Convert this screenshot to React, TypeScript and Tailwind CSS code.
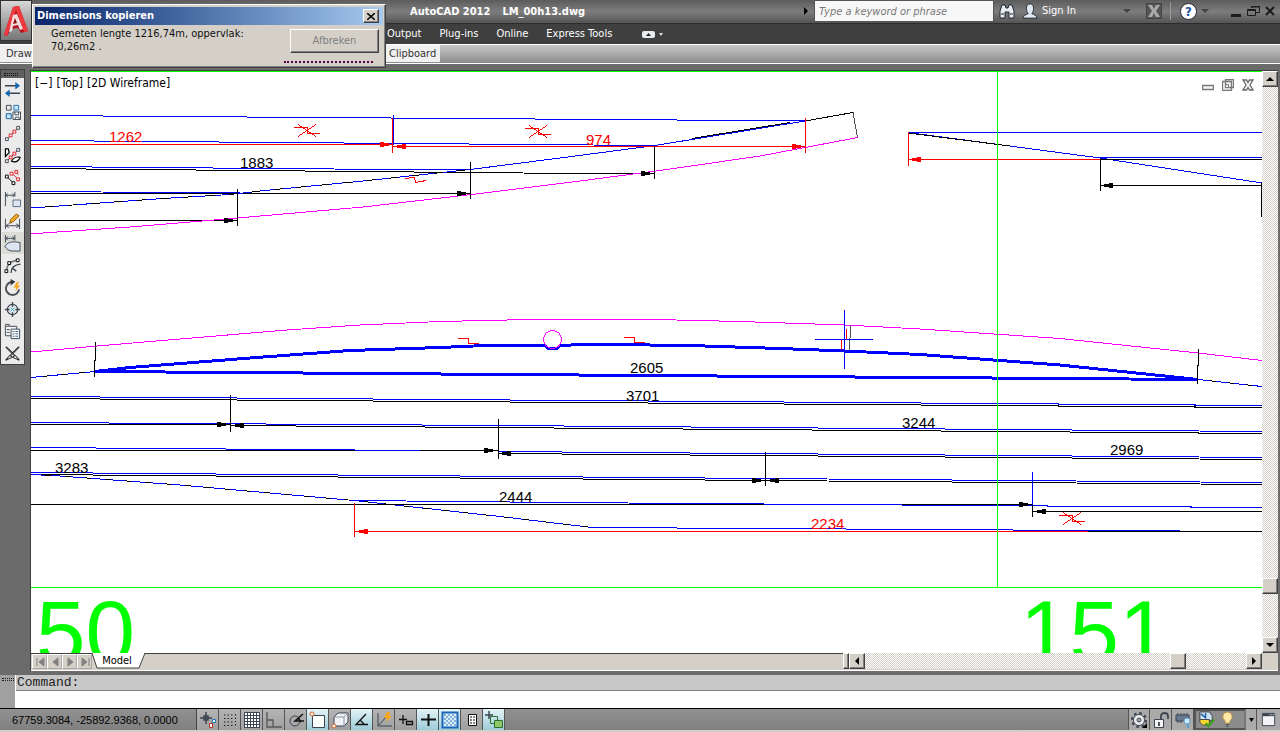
import type { ReactNode } from "react";

const ui = "font-['DejaVu_Sans_Condensed','Noto_Sans',sans-serif]";
const track = "bg-[conic-gradient(#d4d0c8_25%,#ffffff_0_50%,#d4d0c8_0_75%,#ffffff_0)] bg-[length:2px_2px]";
const bevel = "bg-[#d4d0c8] border border-t-white border-l-white border-r-[#404040] border-b-[#404040] shadow-[inset_-1px_-1px_0_#808080]";

type Pt = [number, number];

function Line({ pts, c = "#000", w = 1, dash }: { pts: Pt[]; c?: string; w?: number; dash?: string }) {
  return <polyline points={pts.map((p) => p.join(",")).join(" ")} fill="none" stroke={c} strokeWidth={w} strokeDasharray={dash} />;
}

// dir 1 points right, -1 points left
function Arrow({ x, y, dir, c = "#000" }: { x: number; y: number; dir: number; c?: string }) {
  return <path d={`M${x} ${y}L${x - dir * 13} ${y - 3}V${y + 3}Z`} fill={c} />;
}

function Cross({ x, y }: { x: number; y: number }) {
  return <path d={`M${x - 13} ${y - 3}h13v6h13M${x - 9} ${y - 6}l18 12M${x + 9} ${y - 6}l-18 12`} fill="none" stroke="#f00" />;
}

function Step({ x, y }: { x: number; y: number }) {
  return <path d={`M${x} ${y}h10v5h11`} fill="none" stroke="#f00" />;
}

const B = "#0000ff";
const K = "#000000";
const R = "#ff0000";
const M = "#ff00ff";
const G = "#00ff00";

const lines: { pts: Pt[]; c: string; w?: number; dash?: string }[] = [
  // upper fan
  { pts: [[31, 115.5], [805, 120.9]], c: B },
  { pts: [[31, 140.5], [655, 145.5]], c: B },
  { pts: [[31, 166.5], [394, 169.5], [470, 169.5]], c: B },
  { pts: [[31, 168.5], [577, 173.5], [654, 173.5]], c: K },
  { pts: [[31, 193.5], [470, 193.5]], c: K },
  { pts: [[31, 191.5], [240, 193]], c: B },
  { pts: [[31, 220.5], [237, 220.5]], c: K },
  { pts: [[31, 208], [163, 198.5], [230, 194.5], [263, 190.7], [363, 181], [470, 169.5], [560, 158], [655, 145.5], [805, 121], [853, 112.5]], c: K },
  { pts: [[31, 208], [163, 198.5], [230, 194.5], [263, 190.7], [363, 181], [470, 169.5], [560, 158]], c: B, dash: "14 9" },
  { pts: [[470, 169.5], [560, 158], [655, 145.5], [805, 121]], c: B },
  { pts: [[692, 138.5], [790, 122.5]], c: K },
  { pts: [[853, 112.5], [857.5, 137.5]], c: "#505050" },
  { pts: [[31, 233.8], [130, 227], [240, 217.8], [363, 207], [480, 193.5], [580, 181], [660, 170.5], [760, 156], [858, 137.5]], c: M },
  { pts: [[31, 144.5], [393, 144.5]], c: R },
  { pts: [[393, 146.5], [805, 146.5]], c: R },
  { pts: [[393.5, 115], [393.5, 145]], c: B },
  { pts: [[392.5, 118], [392.5, 153]], c: R },
  { pts: [[805.5, 118], [805.5, 153]], c: R },
  { pts: [[237.5, 189], [237.5, 226]], c: K },
  { pts: [[470.5, 162], [470.5, 199]], c: K },
  { pts: [[654.5, 146], [654.5, 179]], c: K },
  // right fan
  { pts: [[908, 132.5], [1262, 132.5]], c: B },
  { pts: [[908, 132.5], [1100, 158], [1262, 183]], c: B },
  { pts: [[908, 133], [1010, 146]], c: K },
  { pts: [[1100, 157.5], [1262, 157.5]], c: B },
  { pts: [[908, 159.5], [1262, 159.5]], c: K },
  { pts: [[908, 159.5], [1100, 159.5]], c: R },
  { pts: [[908.5, 132], [908.5, 166]], c: R },
  { pts: [[1100, 185.5], [1262, 185.5]], c: K },
  { pts: [[1100.5, 158], [1100.5, 191]], c: K },
  { pts: [[1261.5, 183], [1261.5, 217]], c: K },
  // arc
  { pts: [[31, 352], [97, 346], [287, 330], [360, 325], [440, 321.5], [530, 319.5], [655, 319.5], [740, 321.5], [845, 325], [920, 329], [1060, 338.5], [1198, 353], [1262, 360.5]], c: M },
  { pts: [[31, 377.5], [95, 371.5]], c: K },
  { pts: [[31, 377.5], [95, 371.5]], c: B, dash: "12 6" },
  { pts: [[95, 371.5], [130, 367.5], [250, 358], [350, 350.5], [440, 347.5], [485, 345.5], [545, 345.5], [548, 348.5], [557, 348.5], [560, 345.5], [582, 344.5], [622, 344.5], [705, 346], [780, 348.5], [845, 351], [920, 354.5], [1060, 365], [1198, 379.5]], c: B, w: 3 },
  { pts: [[95, 371.5], [1198, 379.5]], c: B, w: 3 },
  { pts: [[1198, 379.5], [1262, 386.5]], c: K },
  { pts: [[1198, 379.5], [1262, 386.5]], c: B, dash: "12 6" },
  { pts: [[95.5, 342], [95.5, 360], [94.5, 361], [94.5, 377]], c: K },
  { pts: [[1198.5, 349], [1198.5, 365], [1197.5, 366], [1197.5, 384]], c: K },
  // lower rows
  { pts: [[31, 396.5], [1262, 405.5]], c: B },
  { pts: [[31, 398.5], [1262, 407.5]], c: K },
  { pts: [[31, 424.5], [230, 424.5]], c: K },
  { pts: [[31, 422.5], [500, 425.5], [1262, 431.5]], c: B },
  { pts: [[230, 425.5], [1262, 433.5]], c: K },
  { pts: [[31, 450.5], [498, 450.5]], c: K },
  { pts: [[31, 447.5], [420, 450.5]], c: B },
  { pts: [[498, 451.5], [1262, 457.5]], c: B },
  { pts: [[498, 453.5], [1262, 459.5]], c: K },
  { pts: [[31, 472.5], [765, 478.5], [1262, 482.5]], c: B },
  { pts: [[31, 474.5], [765, 480.5], [1262, 484.5]], c: K },
  { pts: [[31, 474.5], [60, 476], [180, 485], [354, 500.5], [500, 516.5], [592, 527.5]], c: K },
  { pts: [[31, 474.5], [60, 476], [180, 485], [354, 500.5], [500, 516.5], [592, 527.5]], c: B, dash: "14 6" },
  { pts: [[31, 504.5], [1032, 504.5]], c: K },
  { pts: [[354, 500.5], [560, 502.5], [830, 504.5], [1262, 507.5]], c: B },
  { pts: [[1032, 511.5], [1262, 511.5]], c: K },
  { pts: [[592, 527.5], [1262, 531.5]], c: B },
  { pts: [[354, 531.5], [1262, 531.5]], c: K },
  { pts: [[354, 531.5], [1088, 531.5]], c: R },
  { pts: [[230.5, 395], [230.5, 432]], c: K },
  { pts: [[498.5, 419], [498.5, 459]], c: K },
  { pts: [[765.5, 452], [765.5, 486]], c: K },
  { pts: [[1032.5, 472], [1032.5, 505]], c: B },
  { pts: [[1032.5, 505], [1032.5, 517]], c: K },
  { pts: [[354.5, 503], [354.5, 537]], c: R },
  // block insert
  { pts: [[841.5, 340], [841.5, 350]], c: R },
  { pts: [[846.5, 329], [846.5, 339]], c: R },
  { pts: [[850.5, 325], [850.5, 338]], c: "#505050" },
  { pts: [[849.5, 338], [849.5, 350]], c: "#505050" },
  { pts: [[844.5, 310], [844.5, 369]], c: B },
  { pts: [[815, 339.5], [873, 339.5]], c: B },
  // grid axes
  { pts: [[997.5, 71], [997.5, 587]], c: G },
  { pts: [[31, 587.5], [1262, 587.5]], c: G },
];

const arrows: [number, number, number, string][] = [
  [393, 144.5, 1, R], [393, 146.5, -1, R], [805, 146.5, 1, R], [237, 220.5, 1, K], [470, 193.5, 1, K],
  [654, 173.5, 1, K], [908, 159.5, -1, R], [1100, 185.5, -1, K], [230, 424.5, 1, K], [231, 425.5, -1, K],
  [497, 450.5, 1, K], [498, 453.5, -1, K], [765, 480.5, 1, K], [766, 480.5, -1, K], [1032, 504.5, 1, K],
  [1033, 511.5, -1, K], [355, 531.5, -1, R],
];

const labels: [string, number, number, string][] = [
  ["1262", 109, 142, R], ["974", 586, 145, R], ["1883", 240, 168, K], ["2605", 630, 373, K], ["3701", 626, 401, K],
  ["3244", 902, 428, K], ["2969", 1110, 455, K], ["3283", 55, 473, K], ["2444", 499, 502, K], ["2234", 811, 529, R],
];

function Drawing() {
  return (
    <svg viewBox="31 72 1231 581" preserveAspectRatio="xMinYMin slice" className="absolute inset-0 w-full h-full" shapeRendering="crispEdges">
      {lines.map((l, i) => (
        <Line key={i} {...l} />
      ))}
      {arrows.map(([x, y, dir, c], i) => (
        <Arrow key={i} x={x} y={y} dir={dir} c={c} />
      ))}
      <Cross x={307} y={130.5} />
      <Cross x={538} y={131.5} />
      <Cross x={1072} y={518.5} />
      <Step x={458} y={338.5} />
      <Step x={624} y={337.5} />
      <path d="M405 178.5l9-1 2 5 10-2" fill="none" stroke={R} />
      <circle cx="552.5" cy="339.5" r="9" fill="none" stroke={M} />
      {labels.map(([t, x, y, c]) => (
        <text key={t} x={x} y={y} fill={c} className="text-[15px] font-['Liberation_Sans',sans-serif]">{t}</text>
      ))}
      <g fill={G} className="text-[89px] font-['Liberation_Sans',sans-serif]">
        <text x="36" y="663">50</text>
        <text x="1020" y="663">151</text>
      </g>
    </svg>
  );
}

function Icon({ children, size = 18 }: { children: ReactNode; size?: number }) {
  return (
    <svg width={size} height={size} viewBox="0 0 18 18" fill="none" stroke="#3b4450" aria-hidden="true" className="shrink-0">
      {children}
    </svg>
  );
}

const tools: { name: string; on?: boolean; art: ReactNode }[] = [
  { name: "Align", art: <><path d="M1 5h13M4 13h13" strokeWidth="1.500" /><path d="M12 1l5 4-5 4zM6 9l-5 4 5 4z" fill="#1066b0" stroke="none" /></> },
  { name: "Copy array", art: <><path d="M2.500 2.500h5v5h-5zM2.500 11.500h5v5h-5z" /><path d="M10.500 2.500h5v5h-5zM2.500 11.500h5v5h-5z" stroke="#1b75bc" fill="#cfe6f7" /><path d="M9.500 9.500h8v8h-8z" fill="#fff" /><path d="M11.500 9.500v3h4v-3M12 17v-2h4v2" /></> },
  { name: "Vertex line", art: <><path d="M3 15L15 3" stroke="#555" /><path d="M1.500 13.500h3v3h-3zM13.500 1.500h3v3h-3z" fill="#fff" /><path d="M5.500 9.500h3v3h-3zM9.500 5.500h3v3h-3z" stroke="#e01b24" fill="#fff" /></> },
  { name: "Vertex hatch", art: <><path d="M1.500 2v8l4-4-1-4zM8 15c2-4 6-5 9-4-1 4-5 6-9 4z" stroke="#000" fill="#fff" strokeWidth="1.300" /><path d="M3 15L15 3" /><path d="M1.500 13.500h3v3h-3zM13.500 1.500h3v3h-3z" fill="#fff" /><path d="M5.500 9.500h3v3h-3zM9.500 5.500h3v3h-3z" stroke="#e01b24" fill="#fff" /></> },
  { name: "Match vertices", art: <><path d="M3 8l7 7" stroke="#000" /><path d="M1.500 6.500h3v3h-3zM8.500 13.500h3v3h-3z" stroke="#000" fill="#fff" /><path d="M8 4l7 7M12 2l3 4" stroke="#e01b24" /><path d="M6.500 3.500h3v3h-3zM13.500 9.500h3v3h-3zM11.500 1.500h3v3h-3z" stroke="#e01b24" fill="#fff" /></> },
  { name: "Dimension block", art: <><path d="M1.500 1v15M11.500 1v5M2 4.500h9M4 2.500l-2 2 2 2M9 2.500l2 2-2 2" /><path d="M9.500 9.500h8v7h-8z" fill="#dde6f0" stroke="#5a6b80" /></> },
  { name: "Dimension edit", art: <><path d="M1.500 6v11M16.500 6v11M2 13.500h14M5 11.500l-3 2 3 2M13 11.500l3 2-3 2" /><path d="M6 11l1-4 6-6 3 2-6 6z" fill="#f5a623" stroke="#8a5a10" /></> },
  { name: "Dimension region", on: true, art: <><path d="M1.500 0v8M11.500 0v6M2 3.500h9M4 1.500l-2 2 2 2M9 1.500l2 2-2 2" /><path d="M1 12c4-6 9-5 16-4v9H9c-4 0-6-2-8-5z" fill="#dde6f0" /></> },
  { name: "Offset arc", art: <><path d="M2.500 15C3 8 8 4 15 3.500" strokeWidth="1.500" stroke="#777" /><path d="M7.500 17c0-6 3-9 10-9.500M9 12l4 3" strokeWidth="1.500" /><path d="M1 13.500h3v3H1zM4 5h3v3H4zM13 2h3v3h-3z" fill="#fff" stroke="#000" /></> },
  { name: "Update", art: <><path d="M10 3a7 7 0 1 0 6 8" strokeWidth="2" stroke="#4a5058" /><path d="M7 0l5 3-5 4z" fill="#333" stroke="none" /><path d="M14 3l-4 6h3l-1 4 5-6h-3l2-4z" fill="#f9a51a" stroke="none" /></> },
  { name: "Center mark", art: <><circle cx="9" cy="9" r="5.500" strokeWidth="1.300" /><path d="M9 1v5M9 12v5M1 9h5M12 9h5" strokeWidth="1.500" /><path d="M7 7l4 4M11 7l-4 4" stroke="#1b9ad6" /></> },
  { name: "Copy list", art: <><path d="M1.500 3.500h12v10h-12zM1.500 3V1.500h4V3M3 7h3M3 10h3" fill="#f4f4f4" /><path d="M7.500 6.500h9v10h-9z" fill="#fff" /><path d="M9 9h2M12 9h3M9 11.500h2M12 11.500h3M9 14h2M12 14h3" stroke="#33608a" /></> },
  { name: "Cut", art: <><path d="M2 2l14 14M16 2L2 16" strokeWidth="2" stroke="#666" /><path d="M2 2l8 7M16 2l-8 7" stroke="#222" /><path d="M2 16l4-5 3 2zM16 16l-4-5-3 2z" fill="#eee" stroke="#222" /></> },
];

const modes: { name: string; on?: boolean; art: ReactNode }[] = [
  { name: "Infer constraints", art: <><path d="M7 1v12M1 7h12M5 5h4v4H5z" strokeWidth="1.500" /><path d="M10.500 12.500h3v4h-3z" stroke="#b03020" fill="#fff" /><path d="M13.500 8.500h3v3h-3z" stroke="#1b75bc" fill="#fff" /></> },
  { name: "Snap", art: <path d="M3 4h9M3 7.500h9M3 11h9M3 14.500h9M14.500 3v8M14.500 13v2" stroke="#222" strokeDasharray="1.500 2" /> },
  { name: "Grid", art: <><path d="M1.500 1.500h15v15h-15z" fill="#fff" /><path d="M4.500 1v16M7.500 1v16M10.500 1v16M13.500 1v16M1 4.500h16M1 7.500h16M1 10.500h16M1 13.500h16" /></> },
  { name: "Ortho", art: <path d="M2 1v15h15M2 9h6v7" stroke="#555" strokeWidth="1.300" /> },
  { name: "Polar", art: <><circle cx="8" cy="10" r="5" /><path d="M17 10H8l8-7M11 7l3 4" stroke="#111" strokeWidth="1.500" /></> },
  { name: "Object snap", on: true, art: <><path d="M3.500 4.500h12v12h-12z" fill="#fff" /><circle cx="3" cy="3" r="2" stroke="#e0591b" fill="#fff" /></> },
  { name: "3D object snap", art: <><path d="M3 6l4-4h10v9l-4 4H3z" fill="#eef1f5" /><path d="M3 6h10l4-4M13 6v9" stroke="#8a94a2" /><circle cx="3" cy="15" r="2" stroke="#e0591b" fill="#fff" /></> },
  { name: "Object tracking", on: true, art: <path d="M13 3L3 13.500h12M7 9l4 4" stroke="#111" strokeWidth="1.300" /> },
  { name: "Dynamic UCS", art: <><path d="M3 2v13h14M3 15L12 5" /><path d="M12 1l-3 6h3l-1 4 6-6h-3l1-4z" fill="#f9a51a" stroke="none" /></> },
  { name: "Dynamic input", art: <path d="M6 4v9M2 8.500h8M9.500 10.500h6v3h-6z" stroke="#111" strokeWidth="1.300" /> },
  { name: "Line weight", on: true, art: <path d="M9.500 3v12M2 8.500h15" stroke="#111" strokeWidth="2" /> },
  { name: "Transparency", on: true, art: <><path d="M1.500 1.500h15v15h-15z" fill="#dcecf8" stroke="#1b66b8" strokeWidth="2" /><path d="M3 4h12M3 8h12M3 12h12" stroke="#7fb2dc" strokeWidth="2" strokeDasharray="2 2" /><path d="M5 6h10M5 10h10M5 14h10" stroke="#7fb2dc" strokeWidth="2" strokeDasharray="2 2" /></> },
  { name: "Quick properties", art: <><path d="M5.500 3.500h8v11h-8z" fill="#fff" stroke="#111" /><path d="M7 6h2M10 6h2M7 9h2M10 9h2M7 12h2M10 12h2" stroke="#111" /></> },
  { name: "Selection cycling", on: true, art: <><path d="M4 0v8M0 4h8" strokeWidth="1.500" /><path d="M5.500 5.500h7v7h-7z" stroke="#2f7030" /><path d="M9.500 9.500h8v7h-8z" fill="#8fc76b" stroke="#2f7030" /></> },
];

function Tri({ dir, c = "#000" }: { dir: "up" | "down" | "left" | "right"; c?: string }) {
  const d = { up: "M0 6h8L4 2z", down: "M0 2h8L4 6z", left: "M6 0v8L2 4z", right: "M2 0v8l4-4z" }[dir];
  return <svg width="8" height="8" viewBox="0 0 8 8" aria-hidden="true" className="shrink-0"><path d={d} fill={c} /></svg>;
}

function ScrollButton({ dir, label }: { dir: "up" | "down" | "left" | "right"; label: string }) {
  return (
    <button aria-label={label} className={`w-4 h-4 shrink-0 flex items-center justify-center ${bevel}`}>
      <Tri dir={dir} />
    </button>
  );
}

function Header() {
  return (
    <header className="flex shrink-0 h-11 bg-[#3f3f3f] text-white">
      <button aria-label="Application menu" className="w-8 h-[41px] shrink-0 border border-[#333] bg-linear-to-b from-[#d8d8d8] to-[#777] flex items-center pl-0.5">
        <svg width="26" height="34" viewBox="0 0 26 34" aria-hidden="true">
          <path d="M10 3l6-1 9 25-7 2-3-5-7 1-4 7-3-1z" fill="#b5121b" />
          <path d="M10 3l6-1 9 25-4 1L13 6 4 32l-3-1z" fill="#ee3a3f" />
          <path d="M12 12l-3 10 6-1z" fill="#8f0a10" />
          <path d="M10 11l4-1 6 15-3 1-2-5-5 1-1 5-3 1zM12 14l-2 6 4-1z" fill="#fff" fillOpacity=".85" />
        </svg>
      </button>
      <div className="flex-1 min-w-0">
        <div className="h-6 flex items-start border-b border-[#2c2c2c] bg-linear-to-b from-[#5c5c5c] via-[#7d7d7d] to-[#555] pl-[378px]">
          <h1 className="flex gap-3 h-6 items-center text-[11px] font-bold whitespace-nowrap">
            <span>AutoCAD 2012</span>
            <span>LM_00h13.dwg</span>
          </h1>
          <div className="ml-auto flex items-center h-[22px]">
            <Tri dir="right" />
            <input aria-label="Search" placeholder="Type a keyword or phrase" className="ml-1 w-[180px] h-[22px] px-1 border border-[#555] bg-[#f7f7f7] text-[11px] italic text-black placeholder:text-[#777]" />
            <button aria-label="Find" className="ml-1">
              <Icon>
                <path d="M2 9l2-6h3l1 3h2l1-3h3l2 6v7h-5v-6H7v6H2z" fill="#e8edf2" stroke="#20262e" />
                <path d="M3 12h3M12 12h3" stroke="#20262e" />
              </Icon>
            </button>
            <button className="ml-1.5 flex items-center gap-1 text-[11px] w-[86px] whitespace-nowrap">
              <Icon size={16}>
                <path d="M9 1c-3 0-4 2-4 5s1 5 2 6c-3 1-5 2-6 5h16c-1-3-3-4-6-5 1-1 2-3 2-6s-1-5-4-5z" fill="#dfe8f2" stroke="#20262e" />
              </Icon>
              Sign In
            </button>
            <div className="w-[38px] flex justify-center"><Tri dir="down" c="#444" /></div>
            <button aria-label="Exchange" className="w-4 h-4 bg-[#555] border border-[#444]">
              <svg viewBox="0 0 14 14" aria-hidden="true"><path d="M1 1h4l2 4 2-4h4l-4 6 4 6H9L7 9l-2 4H1l4-6z" fill="#aaa" /></svg>
            </button>
            <span className="w-px h-[18px] bg-[#999] mx-2" />
            <button aria-label="Help" className="ml-px w-[17px] h-[17px] rounded-full bg-white border border-[#223] text-[#1b4fa0] text-[13px] leading-none font-bold">?</button>
            <div className="w-[34px] flex pl-1"><Tri dir="down" c="#444" /></div>
            <button aria-label="Minimize" className="w-[10px] h-[3px] mt-2 bg-[#1c1c1c]" />
            <button aria-label="Restore" className="ml-1.5">
              <svg width="13" height="12" viewBox="0 0 13 12" fill="none" stroke="#1c1c1c" aria-hidden="true"><path d="M4.500 3V1.500h8v6H9M.500 4.500h8v6h-8zM.500 5.500h8M4.500 2h8" /></svg>
            </button>
            <button aria-label="Close" className="ml-1 mr-1">
              <svg width="12" height="10" viewBox="0 0 12 10" stroke="#1c1c1c" strokeWidth="2" aria-hidden="true"><path d="M2 1l8 8M10 1L2 9" /></svg>
            </button>
          </div>
        </div>
        <nav className="h-5 pl-[355px] flex items-center gap-[18px] text-[11px] whitespace-nowrap">
          <a href="#output">Output</a>
          <a href="#plugins">Plug-ins</a>
          <a href="#online">Online</a>
          <a href="#express">Express Tools</a>
          <button aria-label="Minimize ribbon" className="ml-3 flex items-center gap-1">
            <span className="w-[13px] h-[7px] rounded-[2px] bg-[#e8ecf0] flex items-center justify-center">
              <svg width="5" height="3" aria-hidden="true"><path d="M0 3h5L2.500 0z" fill="#222" /></svg>
            </span>
            <svg width="4" height="3" aria-hidden="true"><path d="M0 0h4L2 3z" fill="#ddd" /></svg>
          </button>
        </nav>
      </div>
    </header>
  );
}

function Dialog() {
  return (
    <div role="dialog" aria-labelledby="dlg-title" className={`absolute left-8 top-1 w-[354px] h-16 p-0.5 ${bevel}`}>
      <div className="h-[18px] pl-0.5 pr-1 flex items-center justify-between bg-linear-to-r from-[#0a246a] to-[#a6caf0] text-white">
        <h2 id="dlg-title" className="text-[11px] font-bold">Dimensions kopieren</h2>
        <button aria-label="Close" className={`w-4 h-[14px] flex items-center justify-center ${bevel}`}>
          <svg width="8" height="7" viewBox="0 0 8 7" stroke="#000" strokeWidth="1.500" aria-hidden="true"><path d="M0 0l8 7M8 0L0 7" /></svg>
        </button>
      </div>
      <div className="flex justify-between pl-4 pr-1">
        <p className="w-[200px] pt-0.5 text-[11px] leading-[13px] text-[#111]">Gemeten lengte 1216,74m, oppervlak: 70,26m2 .</p>
        <div className="pt-1">
          <button disabled className={`block w-[89px] h-6 text-[11px] text-[#808080] ${bevel}`}>Afbreken</button>
          <div className="mt-2 -ml-1.5 w-[89px] h-0.5 border-t-2 border-dotted border-[#5a0050]" />
        </div>
      </div>
    </div>
  );
}

export default function App() {
  return (
    <div className={`relative h-screen flex flex-col overflow-hidden bg-[#6b6b6b] text-[11px] ${ui}`}>
      <Header />
      <div className="h-5 shrink-0 flex justify-between border-y border-white bg-linear-to-b from-[#c8c8c8] to-[#8c8c8c] text-[#333] leading-[16px]">
        <button className="w-10 pl-1.5 h-[17px] bg-[#f0f0f0] text-left">Draw</button>
        <div className="flex-1 pl-[344px]">
          <button className="h-[17px] w-[56px] pl-[5px] bg-[#f0f0f0] text-left">Clipboard</button>
        </div>
      </div>

      <main className="flex-1 min-h-0 flex pt-[5px] pr-0.5">
        <aside className="w-[30px] shrink-0">
          <div className="w-[25px] border border-[#404040] bg-[#ebebeb]">
            <div className="h-2 bg-[#606060] flex items-center pl-[3px]">
              <span className="w-[14px] h-[3px] border-y border-dotted border-[#111]" />
            </div>
            <div className="flex flex-col items-center">
              {tools.map((t) => (
                <button key={t.name} aria-label={t.name} className={`w-[22px] h-[22px] flex items-center justify-center ${t.on ? "bg-[#dcdcd6]" : ""}`}>
                  <Icon size={17}>{t.art}</Icon>
                </button>
              ))}
            </div>
          </div>
        </aside>

        <section className="flex-1 min-w-0 mt-px flex flex-col border-t border-l border-[#404040] bg-[#d4d0c8]">
          <div className="flex-1 min-h-0 flex">
            <div className="relative flex-1 overflow-hidden bg-white border-t border-[#00ff00]">
              <Drawing />
              <div className="relative flex items-start justify-between">
                <div className="flex gap-1 pl-1 pt-[3px] text-xs leading-4 text-black whitespace-nowrap">
                  <button>[−]</button>
                  <button>[Top]</button>
                  <button>[2D Wireframe]</button>
                </div>
                <div className="flex items-center gap-2 pt-[7px] pr-2">
                  <button aria-label="Minimize drawing"><svg width="12" height="12" viewBox="0 0 12 12" fill="none" stroke="#777" aria-hidden="true"><path d="M.500 6.500h11v4H.500z" fill="#f4f4f4" strokeWidth="1.500" /></svg></button>
                  <button aria-label="Restore drawing"><svg width="12" height="12" viewBox="0 0 12 12" fill="#f4f4f4" stroke="#777" aria-hidden="true"><path d="M3.500.500h8v8h-8zM.500 2.500h9v9h-9z" strokeWidth="1.300" /><path d="M3.500 5.500h3v3h-3z" /></svg></button>
                  <button aria-label="Close drawing"><svg width="12" height="12" viewBox="0 0 12 12" fill="#f4f4f4" stroke="#666" strokeWidth="1.300" aria-hidden="true"><path d="M1 1h3.500L6 3.500 7.500 1H11L8 6l3 5H7.500L6 8.500 4.500 11H1l3-5z" /></svg></button>
                </div>
              </div>
            </div>
            <div className={`w-4 flex flex-col ${track}`}>
              <ScrollButton dir="up" label="Scroll up" />
              <div className="flex-[491]" />
              <div className={`h-4 ${bevel}`} />
              <div className="flex-[43]" />
              <ScrollButton dir="down" label="Scroll down" />
            </div>
          </div>

          <div className="h-[17px] shrink-0 flex items-start">
            <div className="flex-1 flex h-4 border-t border-[#404040] pl-px">
              {["M3 1v8M10 1v8L5 5z", "M9 1v8L4 5z", "M4 1v8l5-4z", "M3 1v8l5-4zM10 1v8"].map((d, i) => (
                <button key={d} aria-label={["First", "Previous", "Next", "Last"][i]} className="w-[15px] h-[15px] border border-[#aaa] border-t-white border-l-white flex items-center justify-center">
                  <svg width="12" height="10" viewBox="0 0 12 10" fill="#808080" stroke="#808080" aria-hidden="true"><path d={d} /></svg>
                </button>
              ))}
              <button className="relative w-[54px] h-4 -mt-px pr-1 text-[11px] leading-4 text-black">
                <svg width="54" height="16" viewBox="0 0 54 16" aria-hidden="true" className="absolute inset-0"><path d="M0 0l5 15h42l6-15" fill="#fff" stroke="#404040" /></svg>
                <span className="relative">Model</span>
              </button>
            </div>
            <div className={`w-1.5 h-4 ${bevel}`} />
            <div className={`w-[413px] h-4 flex ${track}`}>
              <ScrollButton dir="left" label="Scroll left" />
              <div className="flex-[305]" />
              <div className={`w-4 ${bevel}`} />
              <div className="flex-[60]" />
              <ScrollButton dir="right" label="Scroll right" />
            </div>
            <div className="w-4 h-4 bg-[#d4d0c8]" />
          </div>
          <div className="h-px bg-white" />
        </section>
      </main>

      <div className="h-[38px] shrink-0 pt-1 flex border-b border-black">
        <div className="w-[15px] bg-[#a0a0a0] pt-[3px] pl-0.5">
          <div className="w-3 h-[3px] border-y border-dotted border-[#222]" />
        </div>
        <div className="flex-1 border-l border-white bg-white font-['Liberation_Mono',monospace] text-[13px] text-[#222]">
          <label htmlFor="cmd" className="block h-4 pl-px leading-[15px] bg-[#c8c8c8] border-b border-[#808080]">Command:</label>
          <input id="cmd" className="block w-full h-[17px] px-1 outline-none" />
        </div>
      </div>

      <footer className="h-[21px] shrink-0 flex bg-linear-to-b from-[#919191] to-[#808080]">
        <output className="w-[197px] pl-3 leading-[23px] text-[11px] text-black whitespace-nowrap border-r border-[#444] font-['Liberation_Sans',sans-serif]">67759.3084, -25892.9368, 0.0000</output>
        {modes.map((m) => (
          <button key={m.name} aria-label={m.name} className={`w-[22px] flex items-center justify-center border-r border-[#555] bg-linear-to-b ${m.on ? "from-[#e4f4f8] to-[#9ccbd8]" : "from-[#b4b4b4] to-[#a0a0a0]"}`}>
            <Icon size={18}>{m.art}</Icon>
          </button>
        ))}
        <div className="flex-1" />
        <button aria-label="Workspace" className="w-[22px] flex items-center justify-center border-x border-[#555] bg-[#aaa]">
          <Icon>
            <circle cx="9" cy="9" r="7" strokeWidth="2" strokeDasharray="2.700 2.800" />
            <circle cx="9" cy="9" r="5.500" fill="#eee" />
            <circle cx="9" cy="9" r="2" fill="#aaa" />
            <path d="M17 12v5h-5z" fill="#000" stroke="none" />
          </Icon>
        </button>
        <button aria-label="Lock" className="w-[22px] flex items-center justify-center border-r border-[#555] bg-[#aaa]">
          <Icon>
            <path d="M2.500 8.500h9v8h-9z" fill="#f4f4f4" />
            <path d="M9 8V5c0-4 7-4 7 0v3M7 11v4" strokeWidth="1.800" />
          </Icon>
        </button>
        <button aria-label="Hardware" className="w-[22px] flex items-center justify-center border-r border-[#555] bg-[#aaa]">
          <Icon>
            <path d="M2 4h13v6H2z" fill="#66788e" />
            <path d="M4 2v2M7 2v2M10 2v2M13 2v2M4 10v2M7 10v2" />
            <circle cx="13" cy="10" r="3" fill="#cfe8fa" stroke="#5a9fd0" />
            <path d="M14 13v4" stroke="#5a9fd0" strokeWidth="2" />
          </Icon>
        </button>
        <div className="w-[52px] flex items-center gap-1 pl-0.5 border-2 border-[#555] border-r-[#777] bg-[#8c8c8c]">
          <Icon size={17}>
            <path d="M2 1h10l3 4v5H2z" fill="#cfe2f3" />
            <path d="M3 3l5 4M8 2v6" stroke="#1b5fa0" strokeWidth="1.500" />
            <path d="M2 9h10v6H5l-3-3z" fill="#f6d32d" />
            <path d="M8 13l3 3 6-7" stroke="#3aa01b" strokeWidth="2.500" />
          </Icon>
          <Icon size={17}>
            <path d="M9 1a5 5 0 0 0-3 9l1 3h4l1-3a5 5 0 0 0-3-9z" fill="#ffe9a8" stroke="#b08a40" />
            <path d="M7 14.500h4M8 16.500h2" />
          </Icon>
        </div>
        <button aria-label="Status menu" className="w-[11px] flex items-center justify-center bg-[#aaa] border-r border-[#555]">
          <svg width="5" height="4" aria-hidden="true"><path d="M0 0h5L2.500 4z" /></svg>
        </button>
        <button aria-label="Clean screen" className="w-[23px] flex items-center justify-center bg-[#aaa]">
          <Icon size={17}>
            <path d="M2.500 2.500h13v13h-13z" fill="#f4f4f4" />
            <path d="M3 4h12" strokeWidth="3" />
            <path d="M10 4h5" stroke="#fff" strokeDasharray="1 1" />
          </Icon>
        </button>
      </footer>
      <div className="h-0.5 shrink-0 bg-[#d4d0c8]" />

      <Dialog />
    </div>
  );
}
